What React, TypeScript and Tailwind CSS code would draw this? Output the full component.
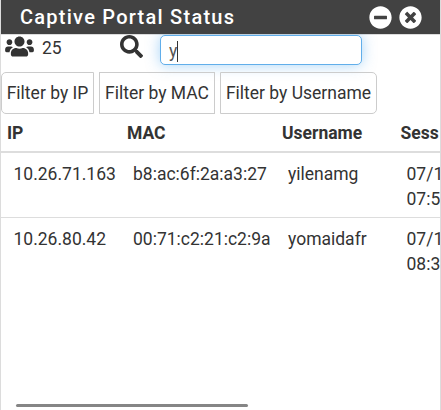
import { FaMinusCircle, FaSearch, FaTimesCircle, FaUsers } from "react-icons/fa";

const rows = [
  { ip: "10.26.71.163", mac: "b8:ac:6f:2a:a3:27", user: "yilenamg", date: "07/1", time: "07:5" },
  { ip: "10.26.80.42", mac: "00:71:c2:21:c2:9a", user: "yomaidafr", date: "07/1", time: "08:3" },
];

export default function App() {
  return (
    <div className="flex h-[410px] w-[441px] flex-col overflow-hidden border-x border-[#dcdcdc] bg-white font-['Roboto',sans-serif] text-[17.5px] leading-[25px] text-[#333]">
      <header className="z-10 flex h-[34px] shrink-0 items-center bg-[#424242] pl-[19px] pr-[18px] text-white">
        <h1 className="grow text-[20px] font-medium tracking-[1.25px]">Captive Portal Status</h1>
        <FaMinusCircle className="mr-[7px] size-[23px]" />
        <FaTimesCircle className="size-[23px]" />
      </header>

      <div className="flex h-[38px] shrink-0 items-start border-t border-[#dcdcdc]">
        <FaUsers className="ml-1 h-[23px] w-[29px]" />
        <span className="ml-2 w-[78px] pt-px">25</span>
        <FaSearch className="size-[23px]" />
        <div className="ml-[17px] flex h-[30px] w-[202px] items-center rounded-[5px] border border-[#61aeea] bg-white pl-2 pt-0.5 shadow-[0_0_14px_rgba(82,170,240,0.5)]">
          <span className="text-[#555]">y</span>
          <span className="h-[21px] w-px bg-[#333]" />
        </div>
      </div>

      <div className="flex h-[42px] shrink-0 gap-[5px] whitespace-nowrap">
        <button className="w-[93px] rounded-l-[5px] border border-[#ccc]">Filter by IP</button>
        <button className="w-[116px] border border-[#ccc]">Filter by MAC</button>
        <button className="w-[157px] rounded-r-[5px] border border-[#ccc]">Filter by Username</button>
      </div>

      <div className="grid h-[39px] shrink-0 grid-cols-[120px_155px_118.5px_39px] border-b-2 border-[#ddd] pl-1.5 pt-[7px] font-bold">
        <span>IP</span>
        <span>MAC</span>
        <span>Username</span>
        <span>Sess</span>
      </div>

      {rows.map((row, index) => (
        <div key={row.ip} className={`grid h-[65px] shrink-0 grid-cols-[119.5px_155px_118.5px_33.5px] pl-[12.5px] pt-[9px] ${index === 0 ? "border-b border-[#ddd]" : ""}`}>
          <span>{row.ip}</span>
          <span>{row.mac}</span>
          <span>{row.user}</span>
          <span className="overflow-hidden whitespace-nowrap">
            {row.date}
            <br />
            {row.time}
          </span>
        </div>
      ))}

      <footer className="mt-auto pb-[3px] pl-[15px]">
        <div className="h-[3px] w-[232px] rounded-full bg-[#858585]" />
      </footer>
    </div>
  );
}
